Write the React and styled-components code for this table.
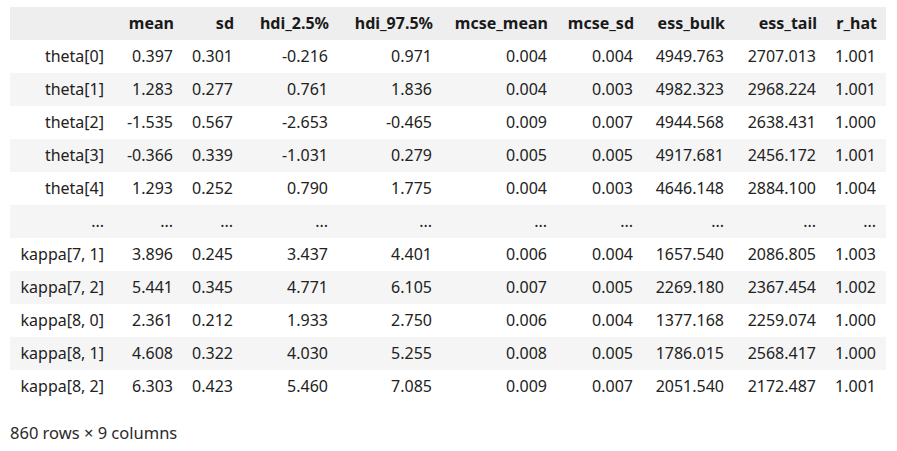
import React from 'react';
import styled, { createGlobalStyle } from 'styled-components';

// GLOBAL RESET
const GlobalStyle = createGlobalStyle`
  body {
    margin: 0;
    background: #ffffff;
    font-family: "Noto Sans", "Open Sans", sans-serif;
    color: #222222;
  }
`;

// OUTPUT CELL WRAPPER
const Output = styled.div`
  padding: 7px 11px 0 10px;
`;

const Frame = styled.table`
  border-collapse: collapse;
  border-spacing: 0;
  table-layout: fixed;
  width: 876px;
  font-size: 16px;
`;

const HeadRow = styled.tr`
  background: #eeeeee;
  height: 33px;
`;

const BodyRow = styled.tr`
  height: 33px;
  background: ${(props) => (props.$striped ? '#f5f5f5' : '#ffffff')};
`;

const HeadCell = styled.th`
  padding: 0 9px 1px 0;
  text-align: right;
  font-weight: 700;
  white-space: nowrap;
  color: #1a1a1a;
`;

const IndexCell = styled.th`
  padding: 0 10px 1px 0;
  text-align: right;
  font-weight: 400;
  white-space: nowrap;
`;

const Cell = styled.td`
  padding: 0 10px 1px 0;
  text-align: right;
  white-space: nowrap;
`;

const Footer = styled.p`
  margin: 18px 0 0 0;
  font-size: 16.5px;
  color: #2a2a2a;
`;

// COLUMN WIDTHS (index first)
const widths = [104, 69, 60, 95, 104, 115, 86, 91, 92, 60];
const columns = ['mean', 'sd', 'hdi_2.5%', 'hdi_97.5%', 'mcse_mean', 'mcse_sd', 'ess_bulk', 'ess_tail', 'r_hat'];

const rows = [
  ['theta[0]', '0.397', '0.301', '-0.216', '0.971', '0.004', '0.004', '4949.763', '2707.013', '1.001'],
  ['theta[1]', '1.283', '0.277', '0.761', '1.836', '0.004', '0.003', '4982.323', '2968.224', '1.001'],
  ['theta[2]', '-1.535', '0.567', '-2.653', '-0.465', '0.009', '0.007', '4944.568', '2638.431', '1.000'],
  ['theta[3]', '-0.366', '0.339', '-1.031', '0.279', '0.005', '0.005', '4917.681', '2456.172', '1.001'],
  ['theta[4]', '1.293', '0.252', '0.790', '1.775', '0.004', '0.003', '4646.148', '2884.100', '1.004'],
  ['...', '...', '...', '...', '...', '...', '...', '...', '...', '...'],
  ['kappa[7, 1]', '3.896', '0.245', '3.437', '4.401', '0.006', '0.004', '1657.540', '2086.805', '1.003'],
  ['kappa[7, 2]', '5.441', '0.345', '4.771', '6.105', '0.007', '0.005', '2269.180', '2367.454', '1.002'],
  ['kappa[8, 0]', '2.361', '0.212', '1.933', '2.750', '0.006', '0.004', '1377.168', '2259.074', '1.000'],
  ['kappa[8, 1]', '4.608', '0.322', '4.030', '5.255', '0.008', '0.005', '1786.015', '2568.417', '1.000'],
  ['kappa[8, 2]', '6.303', '0.423', '5.460', '7.085', '0.009', '0.007', '2051.540', '2172.487', '1.001'],
];

const App = () => {
  return (
    <Output>
      <GlobalStyle />
      <Frame>
        <colgroup>
          {widths.map((w, i) => (
            <col key={i} style={{ width: w }} />
          ))}
        </colgroup>
        <thead>
          <HeadRow>
            <HeadCell />
            {columns.map((c) => (
              <HeadCell key={c}>{c}</HeadCell>
            ))}
          </HeadRow>
        </thead>
        <tbody>
          {rows.map((r, i) => (
            <BodyRow key={r[0] + i} $striped={i % 2 === 1}>
              <IndexCell>{r[0]}</IndexCell>
              {r.slice(1).map((v, j) => (
                <Cell key={j}>{v}</Cell>
              ))}
            </BodyRow>
          ))}
        </tbody>
      </Frame>
      <Footer>860 rows × 9 columns</Footer>
    </Output>
  );
};

export default App;
